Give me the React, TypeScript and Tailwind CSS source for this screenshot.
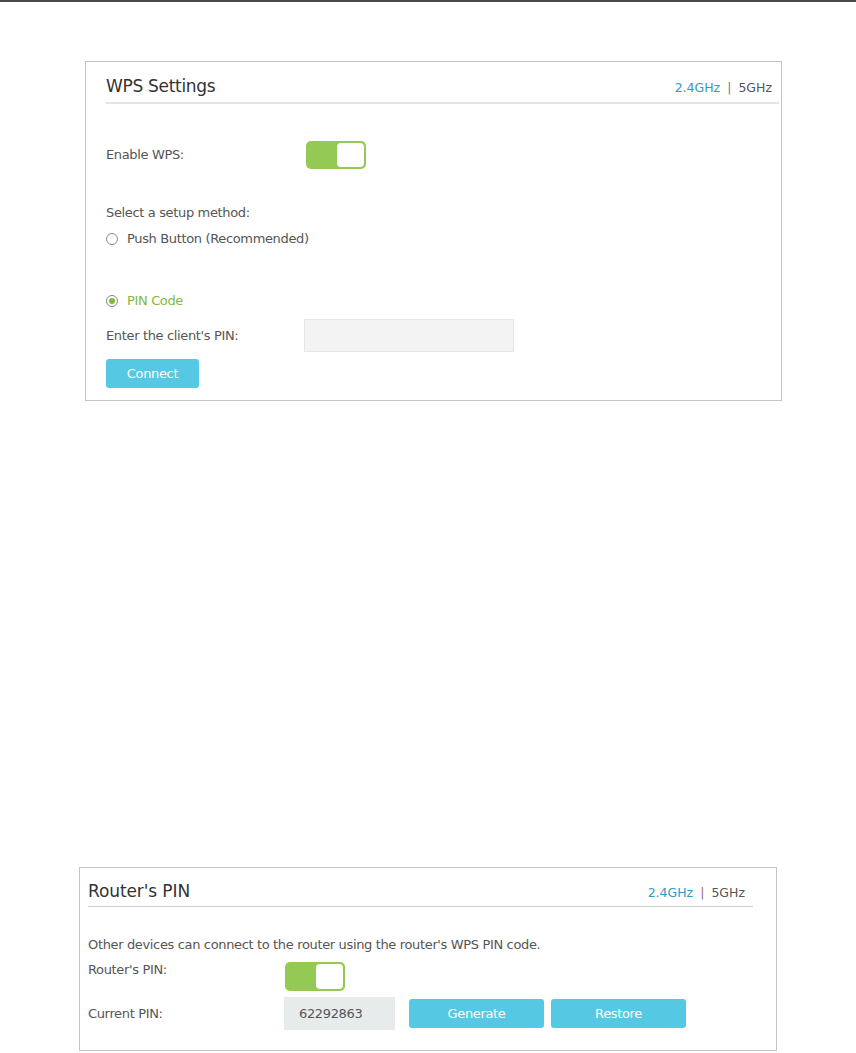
import React from 'react';

const font = "font-['DejaVu_Sans',Verdana,sans-serif]";

function Toggle({ h = 'h-[28px]' }: { h?: string }) {
  return (
    <div className={`w-[60px] ${h} rounded-[5px] bg-[#95c955] p-[2px] flex justify-end`}>
      <div className="w-[27px] h-full rounded-[4px] bg-white" />
    </div>
  );
}

function Radio({ checked }: { checked?: boolean }) {
  return (
    <span className="w-[12px] h-[12px] rounded-full border border-[#8a8a8a] bg-white flex items-center justify-center">
      {checked && <span className="w-[6px] h-[6px] rounded-full bg-[#7fba3c]" />}
    </span>
  );
}

function Bands() {
  return (
    <div className="flex items-baseline text-[12.5px] leading-[18px] tracking-normal">
      <span className="text-[#2e9bc9]">2.4GHz</span>
      <span className="text-[#777] mx-[7px]">|</span>
      <span className="text-[#555]">5GHz</span>
    </div>
  );
}

export default function App() {
  return (
    <div className={`${font} bg-white w-[856px] h-[1053px] text-[#555] text-[13px] leading-[18px] tracking-[-0.35px]`}>
      <div className="h-[2px] bg-[#4a4a4a]" />

      {/* WPS Settings */}
      <section className="mt-[59px] ml-[85px] w-[697px] border border-[#c4c4c4] pt-[14px] pl-[20px] pr-[2px] pb-[12px]">
        <div className="flex items-baseline justify-between h-[20px]">
          <h2 className="text-[17px] leading-[20px] text-[#333] tracking-[-0.3px]">WPS Settings</h2>
          <div className="mr-[7px]"><Bands /></div>
        </div>
        <div className="mt-[6px] h-[2px] bg-[#e4e4e4]" />

        <div className="mt-[37px] flex items-center">
          <span className="w-[200px]">Enable WPS:</span>
          <Toggle />
        </div>

        <div className="mt-[35px]">Select a setup method:</div>
        <label className="mt-[8px] flex items-center gap-[9px]">
          <Radio />
          <span>Push Button (Recommended)</span>
        </label>
        <label className="mt-[44px] flex items-center gap-[9px]">
          <Radio checked />
          <span className="text-[#7fba3c]">PIN Code</span>
        </label>

        <div className="mt-[9px] flex items-center">
          <span className="w-[198px]">Enter the client's PIN:</span>
          <div className="w-[210px] h-[33px] bg-[#f3f3f3] border border-[#e6e6e6]" />
        </div>

        <button className="mt-[7px] w-[93px] h-[29px] rounded-[3px] bg-[#55c8e3] text-white text-[13px]">
          Connect
        </button>
      </section>

      {/* Router's PIN */}
      <section className="mt-[466px] ml-[79px] w-[698px] border border-[#c4c4c4] pt-[13px] pl-[8px] pr-[23px] pb-[20px]">
        <div className="flex items-baseline justify-between h-[20px]">
          <h2 className="text-[17px] leading-[20px] text-[#333] tracking-[-0.1px]">Router's PIN</h2>
          <div className="mr-[8px]"><Bands /></div>
        </div>
        <div className="mt-[5px] h-px bg-[#cfcfcf]" />

        <p className="mt-[29px]">Other devices can connect to the router using the router's WPS PIN code.</p>

        <div className="mt-[8px] flex items-start">
          <span className="w-[197px] -mt-[1px]">Router's PIN:</span>
          <Toggle h="h-[29px]" />
        </div>

        <div className="mt-[6px] flex items-center">
          <span className="w-[196px]">Current PIN:</span>
          <div className="w-[111px] h-[33px] bg-[#e8ebeb] pl-[15px] flex items-center text-[#555]">62292863</div>
          <button className="ml-[14px] w-[135px] h-[29px] rounded-[3px] bg-[#55c8e3] text-white">Generate</button>
          <button className="ml-[7px] w-[135px] h-[29px] rounded-[3px] bg-[#55c8e3] text-white">Restore</button>
        </div>
      </section>
    </div>
  );
}
